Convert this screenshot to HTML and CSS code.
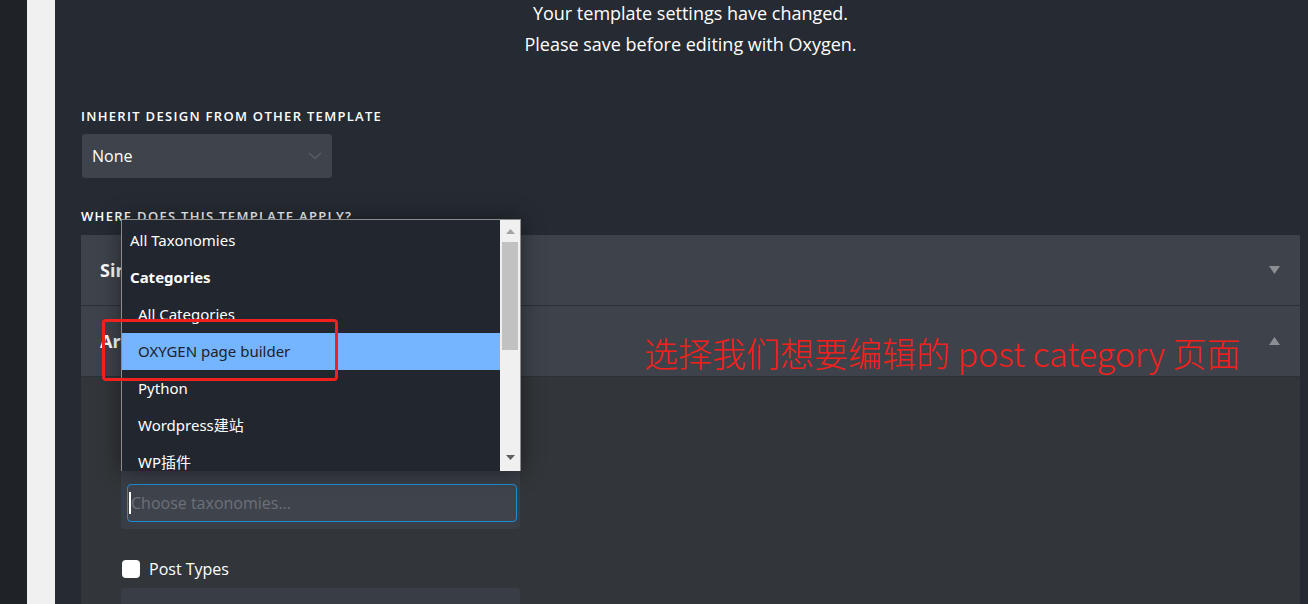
FILE: index.html
```html
<!DOCTYPE html>
<html lang="en">
<head>
    <meta charset="UTF-8">
    <meta name="viewport" content="width=device-width, initial-scale=1.0">
    <title>Template Settings</title>
    <link rel="stylesheet" href="styles.css">
</head>
<body>

<div class="page">
    <div class="rail"></div>
    <div class="gutter"></div>

    <main class="panel">
        <div class="notice">
            <p>Your template settings have changed.</p>
            <p>Please save before editing with Oxygen.</p>
        </div>

        <div class="field-label">Inherit design from other template</div>
        <div class="select-box">
            <span>None</span>
            <svg class="chevron" width="14" height="8" viewBox="0 0 14 8"><path d="M1 1l6 5.5L13 1" fill="none" stroke="#585d65" stroke-width="1.6"/></svg>
        </div>

        <div class="field-label where">Where does this template apply?</div>
        <div class="accordion">
            <div class="acc-head">
                <span>Singular</span>
                <svg width="11" height="8" viewBox="0 0 11 8"><path d="M0 0h11L5.5 8z" fill="#8b8e93"/></svg>
            </div>
            <div class="acc-head">
                <span>Archive</span>
                <svg width="11" height="8" viewBox="0 0 11 8"><path d="M0 8h11L5.5 0z" fill="#8b8e93"/></svg>
            </div>
            <div class="acc-body">
                <div class="check-row"><span class="checkbox"></span>Taxonomies</div>
                <div class="chooser">
                    <div class="chooser-input"><span class="caret"></span>Choose taxonomies...</div>
                </div>
                <div class="check-row"><span class="checkbox"></span>Post Types</div>
                <div class="chooser empty"></div>
            </div>
        </div>

        <!-- open native list of the taxonomy chooser -->
        <div class="dropdown">
            <ul class="options">
                <li class="group-opt">All Taxonomies</li>
                <li class="group">Categories</li>
                <li>All Categories</li>
                <li class="active">OXYGEN page builder</li>
                <li>Python</li>
                <li>Wordpress建站</li>
                <li>WP插件</li>
            </ul>
            <div class="scrollbar">
                <svg width="9" height="5" viewBox="0 0 9 5"><path d="M0 5h9L4.5 0z" fill="#a3a3a3"/></svg>
                <div class="thumb"></div>
                <svg class="down" width="9" height="5" viewBox="0 0 9 5"><path d="M0 0h9L4.5 5z" fill="#606060"/></svg>
            </div>
        </div>

        <!-- screenshot annotation -->
        <div class="mark-box"></div>
        <div class="mark-text">选择我们想要编辑的 post category 页面</div>
    </main>
</div>

</body>
</html>
```

FILE: styles.css
```css
html, body {
    height: 100%;
    margin: 0;
    overflow: hidden;
}
body {
    font-family: "Open Sans", "Noto Sans CJK SC", sans-serif;
    background-color: #262b33;
    color: #fff;
}
.page {
    display: flex;
    height: 100%;
}
.rail {
    width: 27px;
    background: #1f2327;
}
.gutter {
    width: 28px;
    background: #f0f0f0;
}
.panel {
    flex: 1;
    position: relative;
    background: #262b33;
    padding: 0 8px 0 26px;
    overflow: hidden;
}
.notice {
    text-align: center;
    font-size: 18px;
    line-height: 31px;
    margin-top: -2px;
}
.notice p {
    margin: 0;
}
.field-label {
    margin-top: 48px;
    font-size: 13px;
    font-weight: 600;
    letter-spacing: 1.3px;
    text-transform: uppercase;
    line-height: 16px;
}
.field-label.where {
    margin-top: 30px;
}
.select-box {
    width: 250px;
    height: 44px;
    margin: 10px 0 0 1px;
    box-sizing: border-box;
    padding: 0 10px;
    display: flex;
    align-items: center;
    justify-content: space-between;
    background: #3f444c;
    border-radius: 3px;
    font-size: 16px;
}
.accordion {
    margin-top: 11px;
}
.acc-head {
    height: 70px;
    display: flex;
    align-items: center;
    justify-content: space-between;
    padding: 0 20px 0 19px;
    background: #3e434b;
    font-size: 18px;
    font-weight: 700;
    border-bottom: 1px solid #2c3037;
}
.acc-head:last-of-type {
    border-bottom: none;
}
.acc-body {
    background: #323539;
    padding: 40px 0 40px 40px;
}
.check-row {
    display: flex;
    align-items: center;
    gap: 9px;
    height: 18px;
    margin-left: 1px;
    font-size: 16px;
}
.checkbox {
    width: 18px;
    height: 18px;
    background: #fff;
    border-radius: 4px;
}
.chooser {
    width: 399px;
    margin: 10px 0 31px;
    padding: 39px 3px 7px 6px;
    box-sizing: border-box;
    background: #393d45;
    border-radius: 4px;
}
.chooser.empty {
    height: 60px;
    margin-top: 10px;
}
.chooser-input {
    height: 38px;
    box-sizing: border-box;
    border: 1px solid #1b8fd6;
    border-radius: 4px;
    background: #3f444c;
    display: flex;
    align-items: center;
    padding-left: 1px;
    color: #6c7078;
    font-size: 16px;
}
.caret {
    width: 2px;
    height: 22px;
    background: #fff;
}
.dropdown {
    position: absolute;
    left: 66px;
    top: 219px;
    width: 400px;
    height: 252px;
    box-sizing: border-box;
    display: flex;
    background: #22262e;
    border: 1px solid #8c8c8c;
    border-bottom: none;
    box-shadow: 0 0 22px rgba(0, 0, 0, 0.45);
    overflow: hidden;
    font-family: "Noto Sans", "Noto Sans CJK SC", sans-serif;
}
.options {
    flex: 1;
    list-style: none;
    margin: 0;
    padding: 2px 0 0;
    font-size: 15px;
}
.options li {
    height: 37px;
    line-height: 37px;
    padding-left: 16px;
    white-space: nowrap;
}
.options li.group-opt,
.options li.group {
    padding-left: 8px;
}
.options li.group {
    font-weight: 700;
}
.options li.active {
    background: #75b5ff;
    color: #1d2129;
}
.scrollbar {
    width: 20px;
    background: #f0f0f0;
    display: flex;
    flex-direction: column;
    align-items: center;
    padding-top: 9px;
}
.thumb {
    width: 16px;
    height: 108px;
    margin-top: 8px;
    background: #c1c1c1;
}
.scrollbar .down {
    margin-top: auto;
    margin-bottom: 11px;
}
.mark-box {
    position: absolute;
    left: 47px;
    top: 319px;
    width: 236px;
    height: 62px;
    box-sizing: border-box;
    border: 3px solid #f2211d;
    border-radius: 4px;
}
.mark-text {
    position: absolute;
    left: 589px;
    top: 329px;
    font-family: "Noto Sans CJK SC", sans-serif;
    font-weight: 300;
    font-size: 34px;
    line-height: 48px;
    color: #f41f1b;
    white-space: nowrap;
}
```
